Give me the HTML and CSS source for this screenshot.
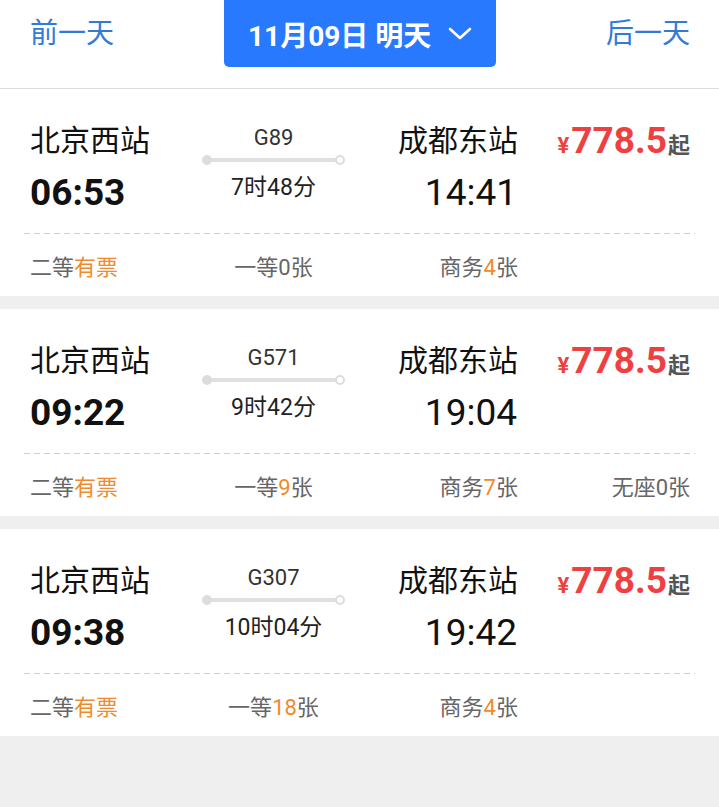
FILE: index.html
```html
<!DOCTYPE html>
<html lang="zh-CN">
<head>
    <meta charset="UTF-8">
    <meta name="viewport" content="width=device-width, initial-scale=1.0">
    <title>车次列表</title>
    <link rel="stylesheet" href="styles.css">
</head>
<body>
    <div class="date-bar">
        <a class="day-link">前一天</a>
        <div class="date-picker">
            <span>11月09日 明天</span>
            <svg class="chevron" width="24" height="14" viewBox="0 0 24 14">
                <polyline points="2,2 12,11 22,2" fill="none" stroke="#fff" stroke-width="2.6" stroke-linecap="round" stroke-linejoin="round"/>
            </svg>
        </div>
        <a class="day-link">后一天</a>
    </div>

    <div class="train-list">
        <!-- G89 -->
        <div class="train-card">
            <div class="train-main">
                <div class="station from">北京西站</div>
                <div class="train-middle">
                    <div class="train-no">G89</div>
                    <div class="track"><i class="dot start"></i><i class="dot end"></i></div>
                    <div class="duration">7时48分</div>
                </div>
                <div class="station to">成都东站</div>
                <div class="price"><small>¥</small>778.5<em>起</em></div>
                <div class="time from">06:53</div>
                <div class="time to">14:41</div>
            </div>
            <div class="seats">
                <span class="seat">二等<b>有票</b></span>
                <span class="seat">一等0张</span>
                <span class="seat">商务<b>4</b>张</span>
                <span class="seat"></span>
            </div>
        </div>

        <!-- G571 -->
        <div class="train-card">
            <div class="train-main">
                <div class="station from">北京西站</div>
                <div class="train-middle">
                    <div class="train-no">G571</div>
                    <div class="track"><i class="dot start"></i><i class="dot end"></i></div>
                    <div class="duration">9时42分</div>
                </div>
                <div class="station to">成都东站</div>
                <div class="price"><small>¥</small>778.5<em>起</em></div>
                <div class="time from">09:22</div>
                <div class="time to">19:04</div>
            </div>
            <div class="seats">
                <span class="seat">二等<b>有票</b></span>
                <span class="seat">一等<b>9</b>张</span>
                <span class="seat">商务<b>7</b>张</span>
                <span class="seat">无座0张</span>
            </div>
        </div>

        <!-- G307 -->
        <div class="train-card">
            <div class="train-main">
                <div class="station from">北京西站</div>
                <div class="train-middle">
                    <div class="train-no">G307</div>
                    <div class="track"><i class="dot start"></i><i class="dot end"></i></div>
                    <div class="duration">10时04分</div>
                </div>
                <div class="station to">成都东站</div>
                <div class="price"><small>¥</small>778.5<em>起</em></div>
                <div class="time from">09:38</div>
                <div class="time to">19:42</div>
            </div>
            <div class="seats">
                <span class="seat">二等<b>有票</b></span>
                <span class="seat">一等<b>18</b>张</span>
                <span class="seat">商务<b>4</b>张</span>
                <span class="seat"></span>
            </div>
        </div>
    </div>
</body>
</html>
```

FILE: styles.css
```css
* {
    margin: 0;
    padding: 0;
    box-sizing: border-box;
}

body {
    background-color: #efefef;
    font-family: Roboto, "Noto Sans CJK SC", sans-serif;
    color: #111;
}

/* thanh chọn ngày */
.date-bar {
    height: 89px;
    padding: 0 29px 21px 30px;
    display: flex;
    align-items: center;
    justify-content: space-between;
    background-color: #fff;
    border-bottom: 1px solid #dcdcdc;
}

.day-link {
    width: 84px;
    font-size: 28px;
    line-height: 67px;
    color: #2f7bd8;
}

.date-picker {
    width: 272px;
    height: 67px;
    padding-left: 24px;
    display: flex;
    align-items: center;
    background-color: #2979ff;
    border-radius: 0 0 5px 5px;
    color: #fff;
    font-size: 28px;
    font-weight: bold;
}

.date-picker .chevron {
    margin-left: 17px;
}

/* danh sách chuyến */
.train-card {
    background-color: #fff;
    margin-bottom: 13px;
}

.train-main {
    display: grid;
    grid-template-columns: 172px 143px 173px 172px;
    grid-template-rows: 40px 44px;
    row-gap: 10px;
    margin: 0 24px;
    padding: 32px 5px 19px 6px;
    background: linear-gradient(to right, #cfcfcf 6px, transparent 6px) left bottom / 10px 1px repeat-x;
}

.station {
    font-size: 30px;
    line-height: 40px;
}

.station.from {
    grid-column: 1;
    grid-row: 1;
}

.station.to {
    grid-column: 3;
    grid-row: 1;
    text-align: right;
}

.time {
    font-size: 37px;
    line-height: 44px;
    grid-row: 2;
}

.time.from {
    grid-column: 1;
    font-weight: bold;
}

.time.to {
    grid-column: 3;
    text-align: right;
    padding-right: 1px;
}

.train-middle {
    grid-column: 2;
    grid-row: 1 / span 2;
    display: flex;
    flex-direction: column;
    align-items: center;
}

.train-no {
    font-size: 22px;
    line-height: 33px;
    color: #333;
}

.track {
    position: relative;
    width: 143px;
    height: 10px;
    margin-top: 1px;
}

.track::before {
    content: "";
    position: absolute;
    left: 5px;
    right: 5px;
    top: 3px;
    height: 4px;
    background-color: #e0e0e0;
}

.dot {
    position: absolute;
    top: 0;
    width: 10px;
    height: 10px;
    border-radius: 50%;
}

.dot.start {
    left: 0;
    background-color: #dcdcdc;
}

.dot.end {
    right: 0;
    background-color: #fff;
    border: 2px solid #dcdcdc;
}

.duration {
    margin-top: 8px;
    font-size: 23px;
    line-height: 30px;
    color: #222;
}

.price {
    grid-column: 4;
    grid-row: 1;
    text-align: right;
    font-size: 37px;
    line-height: 40px;
    font-weight: bold;
    color: #ee4040;
}

.price small {
    font-size: 22px;
    margin-right: 2px;
}

.price em {
    font-style: normal;
    font-size: 22px;
    color: #555;
    margin-left: 1px;
}

.seats {
    display: grid;
    grid-template-columns: 172px 143px 173px 172px;
    height: 62px;
    align-items: center;
    padding: 0 29px 0 30px;
    font-size: 22px;
    color: #666;
}

.seat b {
    font-weight: normal;
    color: #f08a2c;
}

.seat:nth-child(2) {
    text-align: center;
}

.seat:nth-child(3),
.seat:nth-child(4) {
    text-align: right;
}
```
